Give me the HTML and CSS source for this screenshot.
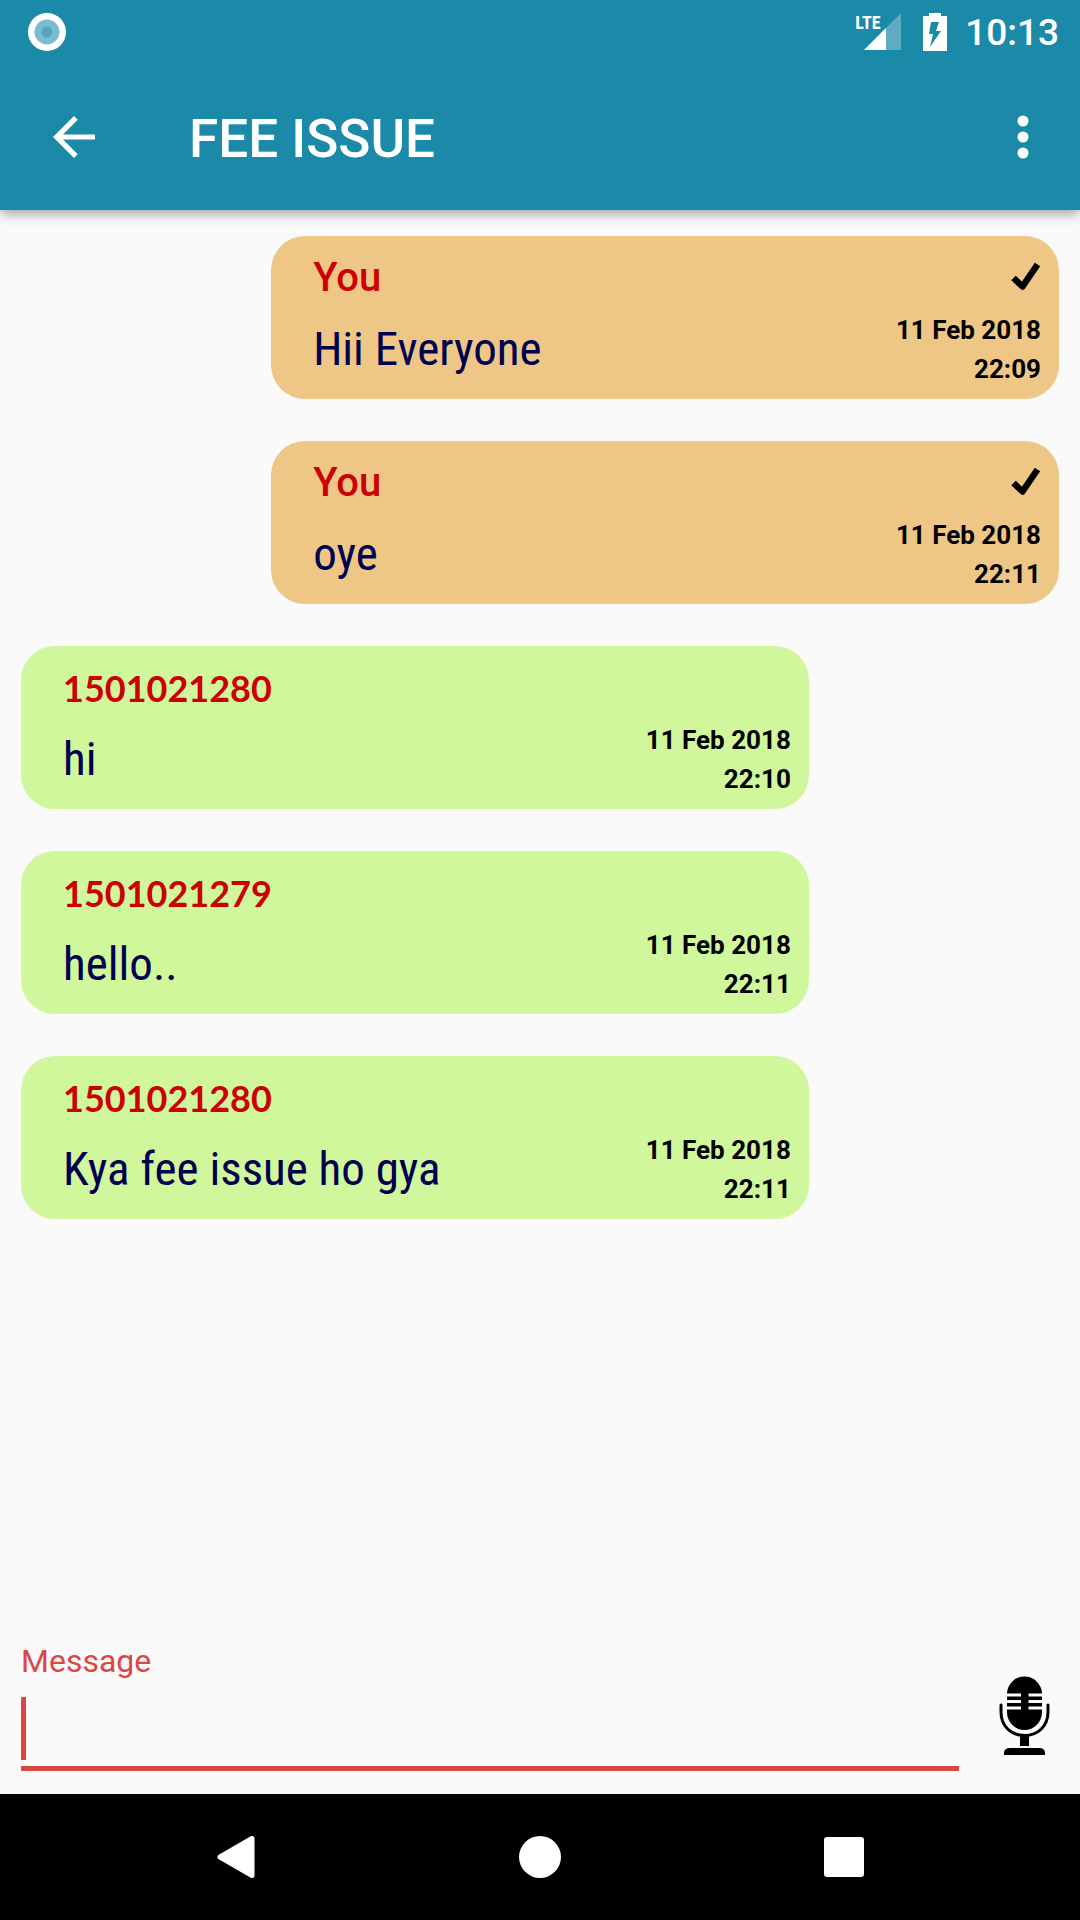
FILE: index.html
```html
<!DOCTYPE html>
<html lang="en">
<head>
<meta charset="utf-8">
<meta name="viewport" content="width=device-width, initial-scale=1">
<title>FEE ISSUE</title>
<link rel="stylesheet" href="styles.css">
</head>
<body>
<svg class="defs" aria-hidden="true">
  <symbol id="check" viewBox="0 0 31 30"><path d="M3.500 17 12.500 25.500 27.500 3.500" fill="none" stroke="#000" stroke-width="6.500" stroke-linejoin="round"/></symbol>
</svg>
<header class="header">
  <div class="status">
    <svg class="status-dot" width="38" height="38" viewBox="0 0 38 38"><circle cx="19" cy="19" r="19" fill="#fff"/><circle cx="19" cy="19" r="12.500" fill="#7dbbcf"/><circle cx="19" cy="19" r="5.500" fill="#55a7c0"/></svg>
    <div class="status-right">
      <div class="signal">
        <span class="lte">LTE</span>
        <svg width="37" height="37" viewBox="0 0 37 37"><path d="M37 0V37H0z" fill="#fff" opacity=".3"/><path d="M22 15V37H0z" fill="#fff"/></svg>
      </div>
      <svg width="24" height="38" viewBox="0 0 24 38"><path d="M6 0H18V3H24V38H0V3H6z" fill="#fff"/><path d="M8 9H16L13 18H18L7 34 10 21H6z" fill="#1b89a8"/></svg>
      <time class="clock">10:13</time>
    </div>
  </div>
  <div class="toolbar">
    <button class="icon-button" type="button" aria-label="Back"><svg width="42" height="42" viewBox="0 0 42 42"><path d="M42 18.400H10L24.700 3.700 21 0 0 21 21 42 24.700 38.300 10 23.600H42z" fill="#fff"/></svg></button>
    <h1 class="title">FEE ISSUE</h1>
    <button class="icon-button" type="button" aria-label="More options"><svg width="12" height="44" viewBox="0 0 12 44"><g fill="#fff"><circle cx="6" cy="6" r="5.500"/><circle cx="6" cy="22" r="5.500"/><circle cx="6" cy="38" r="5.500"/></g></svg></button>
  </div>
</header>
<main class="messages">
  <article class="bubble bubble-own">
    <div class="content"><h2 class="sender">You</h2><p class="text">Hii Everyone</p></div>
    <div class="meta"><svg class="check"><use href="#check"/></svg><time class="stamp">11 Feb 2018<br>22:09</time></div>
  </article>
  <article class="bubble bubble-own">
    <div class="content"><h2 class="sender">You</h2><p class="text">oye</p></div>
    <div class="meta"><svg class="check"><use href="#check"/></svg><time class="stamp">11 Feb 2018<br>22:11</time></div>
  </article>
  <article class="bubble">
    <div class="content"><h2 class="sender">1501021280</h2><p class="text">hi</p></div>
    <div class="meta"><time class="stamp">11 Feb 2018<br>22:10</time></div>
  </article>
  <article class="bubble">
    <div class="content"><h2 class="sender">1501021279</h2><p class="text">hello..</p></div>
    <div class="meta"><time class="stamp">11 Feb 2018<br>22:11</time></div>
  </article>
  <article class="bubble">
    <div class="content"><h2 class="sender">1501021280</h2><p class="text">Kya fee issue ho gya</p></div>
    <div class="meta"><time class="stamp">11 Feb 2018<br>22:11</time></div>
  </article>
</main>
<form class="composer">
  <div class="field">
    <label class="label" for="message">Message</label>
    <div class="entry"><span class="caret"></span><input class="input" id="message" type="text" autocomplete="off"></div>
  </div>
  <button class="mic" type="button" aria-label="Record voice message">
    <svg width="52" height="80" viewBox="0 0 52 80"><path d="M8 18a17.500 17.500 0 0 1 35 0v18a17.500 18 0 0 1-35 0z"/><path d="M8 19H22M8 25.500H22M8 32H22M29.500 19H43M29.500 25.500H43M29.500 32H43" stroke="#fafafa" stroke-width="3"/><path d="M2 29V36C2 50 12 59.500 25.500 59.500S49 50 49 36V29" fill="none" stroke="#000" stroke-width="3" stroke-linecap="round"/><path d="M21 59H30V70H21zM5 79V77Q5 72 11 72H40Q46 72 46 77V79z"/></svg>
  </button>
</form>
<nav class="navbar">
  <button class="nav-button" type="button" aria-label="Back"><svg width="42" height="42" viewBox="0 0 42 42"><path d="M4 21 36 2.500V39.500z" fill="#fff" stroke="#fff" stroke-width="5" stroke-linejoin="round"/></svg></button>
  <button class="nav-button" type="button" aria-label="Home"><svg width="42" height="42" viewBox="0 0 42 42"><circle cx="21" cy="21" r="21" fill="#fff"/></svg></button>
  <button class="nav-button" type="button" aria-label="Recent apps"><svg width="42" height="42" viewBox="0 0 42 42"><rect x="2" y="1" width="40" height="40" rx="3" fill="#fff"/></svg></button>
</nav>
</body>
</html>
```
FILE: styles.css
```css
* { box-sizing: border-box; margin: 0; padding: 0; }
body {
  min-height: 100vh;
  display: flex;
  flex-direction: column;
  background: #fafafa;
  font-family: Roboto, sans-serif;
}
button { border: 0; background: none; display: flex; align-items: center; justify-content: center; cursor: pointer; }
svg { display: block; }
.defs { position: absolute; width: 0; height: 0; }

.header { background: #1b89a8; color: #fff; box-shadow: 0 3px 12px rgba(0, 0, 0, .4); }
.status { height: 63px; padding: 0 21px 0 28px; display: flex; justify-content: space-between; align-items: center; }
.status-right { display: flex; align-items: center; gap: 18px; }
.signal { position: relative; padding-left: 9px; margin-right: 4px; }
.lte { position: absolute; left: 0; top: 0; font: 700 18px/19px "Roboto Condensed", Roboto, sans-serif; }
.clock { font-weight: 500; font-size: 37px; line-height: 43px; padding-top: 2px; }
.toolbar { height: 147px; padding: 0 15px 0 32px; display: flex; align-items: center; }
.icon-button { width: 84px; height: 84px; }
.title { flex: 1; padding: 4px 0 0 73px; font-weight: 500; font-size: 53px; line-height: 64px; }

.messages { flex: 1; padding: 26px 21px; display: flex; flex-direction: column; gap: 42px; }
.bubble { width: 75.9%; border-radius: 34px; background: #d0f79b; display: flex; justify-content: space-between; padding: 0 18px 0 42px; }
.bubble-own { align-self: flex-end; background: #eec786; }
.content { padding: 14px 0 22px; display: flex; flex-direction: column; gap: 15px; }
.sender { color: #c00; font: 700 36px/56px Lato, sans-serif; }
.bubble-own .sender { font: 500 40px/56px Roboto, sans-serif; }
.text { color: #00004f; font: 400 47px/56px "Roboto Condensed", Roboto, sans-serif; }
.meta { padding: 25px 0 10px; display: flex; flex-direction: column; align-items: flex-end; justify-content: flex-end; gap: 20px; }
.check { width: 31px; height: 30px; }
.stamp { font-weight: 700; font-size: 26px; line-height: 39px; text-align: right; }

.composer { padding: 0 21px 23px; display: flex; align-items: flex-end; }
.field { flex: 1; border-bottom: 5px solid #dc4744; }
.label { display: block; color: #dc4744; font-size: 32px; line-height: 40px; }
.entry { display: flex; padding: 16px 0 6px; }
.caret { width: 5px; background: #dc4744; }
.input { flex: 1; min-width: 0; height: 63px; border: 0; outline: 0; background: none; font: 400 47px/63px Roboto, sans-serif; }
.mic { width: 100px; padding: 0 0 15px 31px; }

.navbar { height: 126px; padding: 0 85px; background: #000; display: flex; }
.nav-button { flex: 1; }
```
